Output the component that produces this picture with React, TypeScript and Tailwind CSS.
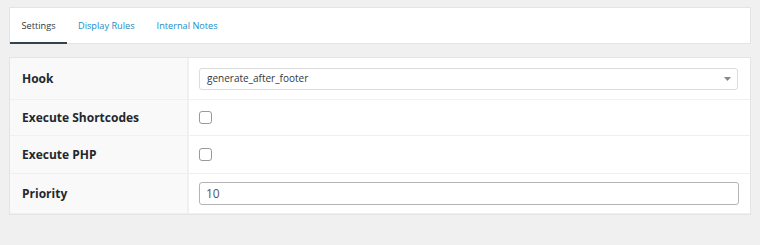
import React from "react";

export default function App() {
  const font = { fontFamily: '"Open Sans", "Noto Sans", Arial, sans-serif' };
  return (
    <div className="w-[760px] h-[245px] bg-[#f0f0f1] pt-[7px] px-[9px]" style={font}>
      <div className="bg-white border border-[#e2e4e7] h-[37px] flex items-stretch">
        <div className="w-[57px] flex items-center justify-center pt-[1px] text-[9.2px] text-[#32373c] border-b-2 border-[#32434f] mb-[-1px]">
          Settings
        </div>
        <div className="flex items-center pt-[1px] text-[9.2px] text-[#1a8dc6] ml-[11px]">Display Rules</div>
        <div className="flex items-center pt-[1px] text-[9.2px] text-[#1a8dc6] ml-[22px]">Internal Notes</div>
      </div>
      <div className="mt-[13px] bg-white border border-[#e2e4e7] w-[742px]">
        <div className="flex h-[42px] border-b border-[#f0f0f1]">
          <div className="w-[179px] bg-[#f9f9f9] flex items-center pl-[12px] text-[12px] font-bold text-[#23282d] border-r-2 border-[#f0f0f1]">Hook</div>
          <div className="flex-1 flex items-center pl-[10px] pr-[12px]">
            <div className="w-full h-[22px] border border-[#dcdcde] rounded-[3px] flex items-center justify-between pl-[7px] pr-[6px] text-[10px] text-[#32373c]">
              <span>generate_after_footer</span>
              <svg width="7" height="4" viewBox="0 0 7 4"><path d="M0 0h7L3.5 4z" fill="#888" /></svg>
            </div>
          </div>
        </div>
        <div className="flex h-[36px] border-b border-[#f0f0f1]">
          <div className="w-[179px] bg-[#f9f9f9] flex items-center pl-[12px] text-[12px] font-bold text-[#23282d] border-r-2 border-[#f0f0f1]">Execute Shortcodes</div>
          <div className="flex-1 flex items-center pl-[10px]">
            <div className="w-[13px] h-[13px] border border-[#9a9a9a] rounded-[3px] bg-white" />
          </div>
        </div>
        <div className="flex h-[38px] border-b border-[#f0f0f1]">
          <div className="w-[179px] bg-[#f9f9f9] flex items-center pl-[12px] text-[12px] font-bold text-[#23282d] border-r-2 border-[#f0f0f1]">Execute PHP</div>
          <div className="flex-1 flex items-center pl-[10px]">
            <div className="w-[13px] h-[13px] border border-[#9a9a9a] rounded-[3px] bg-white" />
          </div>
        </div>
        <div className="flex h-[40px] border-b border-[#f0f0f1]">
          <div className="w-[179px] bg-[#f9f9f9] flex items-center pl-[12px] text-[12px] font-bold text-[#23282d] border-r-2 border-[#f0f0f1]">Priority</div>
          <div className="flex-1 flex items-center pl-[10px] pr-[11px]">
            <div className="w-full h-[23px] border border-[#b4b4b4] rounded-[3px] flex items-center pl-[6px] text-[12px] text-[#555]">10</div>
          </div>
        </div>
      </div>
    </div>
  );
}
